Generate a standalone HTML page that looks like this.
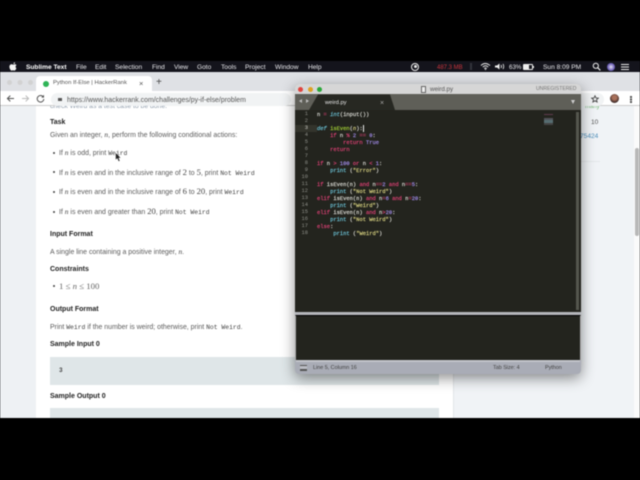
<!DOCTYPE html>
<html><head><meta charset="utf-8"><style>
html,body{margin:0;padding:0;width:640px;height:480px;overflow:hidden;background:#000}
*{box-sizing:border-box}
.a{position:absolute;white-space:pre}
#root{position:absolute;left:0;top:0;width:640px;height:480px;overflow:hidden;font-family:"Liberation Sans",sans-serif;filter:blur(.4px)}
.m{font-size:6.6px;color:#e8e8ec;top:62.5px;line-height:10px}
.t{font-size:6.95px;color:#5c5c5c;line-height:9px;left:59px}
.h{font-size:7px;font-weight:bold;color:#222;left:50px;line-height:9px}
code{font-family:"Liberation Mono",monospace;font-size:6.4px;color:#444}
i.e{font-family:"Liberation Serif",serif;font-size:7.4px;color:#444}
i.n{font-family:"Liberation Serif",serif;font-size:8.6px;color:#444;font-style:normal}
.b{position:absolute;left:52.5px;width:2.4px;height:2.4px;border-radius:50%;background:#444}
.ln{position:absolute;left:296px;width:12px;text-align:right;font:5.4px/7px "Liberation Mono",monospace;color:#8f908a;white-space:pre}
.c{position:absolute;left:317px;font:5.45px/7px "Liberation Mono",monospace;-webkit-text-stroke:.18px currentColor;color:#dcdcd6;white-space:pre}
.r{color:#dc4074}.p{color:#a08ae8}.g{color:#a0cc34}.y{color:#d8d280}.u{color:#6cc4d8}
</style></head><body><div id="root">
<!-- menu bar -->
<div class="a" style="left:0;top:61px;width:640px;height:11px;background:#14141c"></div>
<svg class="a" style="left:9px;top:62px" width="8" height="9" viewBox="0 0 8 9"><path d="M5.4 1.9C5.9 1.3 6 .7 6 .2 5.3.3 4.6.8 4.4 1.6c.4.1.7.5 1 .3zM6.6 4.7c0-.9.6-1.4.9-1.6-.5-.7-1.200-.9-1.600-.9-.7 0-1.200.4-1.600.4s-1-.4-1.600-.4C1.400 2.200.400 3.200.400 4.800c0 1.700 1.200 3.800 2.200 3.800.5 0 .8-.4 1.400-.4s.8.4 1.400.4c.8 0 1.600-1.300 2-2.500-.6-.2-.8-1-.8-1.400z" fill="#f4f4f4"/></svg>
<div class="a m" style="left:26px;font-weight:bold;color:#fff">Sublime Text</div>
<div class="a m" style="left:76px">File</div>
<div class="a m" style="left:95px">Edit</div>
<div class="a m" style="left:115px">Selection</div>
<div class="a m" style="left:152px">Find</div>
<div class="a m" style="left:174px">View</div>
<div class="a m" style="left:197px">Goto</div>
<div class="a m" style="left:221px">Tools</div>
<div class="a m" style="left:245px">Project</div>
<div class="a m" style="left:275px">Window</div>
<div class="a m" style="left:308px">Help</div>
<div class="a" style="left:411px;top:62.500px;width:8px;height:8px;border-radius:50%;border:1px solid #eee"></div>
<div class="a" style="left:413.500px;top:65px;width:3px;height:3px;border-radius:50%;background:#eee"></div>
<div class="a m" style="left:437px;color:#c8343c;font-size:6px">487.3 MB</div>
<div class="a" style="left:470px;top:63px;width:1.500px;height:7px;background:#33343c"></div>
<svg class="a" style="left:480px;top:62px" width="30" height="9" viewBox="0 0 30 9"><path d="M1 3.500Q5-.5 10 3.500M2.800 5Q5.500 2.500 8.200 5M4.300 6.500Q5.500 5.500 6.700 6.500" stroke="#eee" fill="none" stroke-width="1"/><path d="M5.500 8.300L4.500 7h2z" fill="#eee"/><path d="M15 3.500h2l2.500-2v6l-2.500-2h-2z" fill="#eee"/><path d="M21 3q1 1.500 0 3M23 2q1.500 2.500 0 5" stroke="#eee" fill="none" stroke-width=".8"/></svg>
<div class="a m" style="left:509px;font-size:6.200px">63%</div>
<div class="a" style="left:523px;top:63.500px;width:10px;height:6px;border:1px solid #eee;border-radius:1px"><div style="width:5px;height:4px;background:#eee"></div></div>
<div class="a" style="left:533px;top:65.500px;width:1px;height:2px;background:#eee"></div>
<div class="a m" style="left:543px">Sun 8:09 PM</div>
<svg class="a" style="left:592px;top:62px" width="9" height="9" viewBox="0 0 9 9"><circle cx="3.800" cy="3.800" r="2.600" fill="none" stroke="#eee"/><path d="M5.800 5.800L8.300 8.300" stroke="#eee" stroke-width="1.200"/></svg>
<div class="a" style="left:607px;top:62.500px;width:8px;height:8px;border-radius:50%;background:radial-gradient(#e4e4f4,#6d5db4 60%,#3a5fb0)"></div>
<div class="a" style="left:621px;top:63.500px;width:8px;height:6px;background:repeating-linear-gradient(#eee 0 1px,#14141c 1px 2.500px)"></div>
<!-- page -->
<div class="a" style="left:0;top:106px;width:640px;height:312px;background:#f0f3f6"></div>
<div class="a" style="left:0;top:106px;width:36px;height:312px;background:#eef1f4"></div>
<div class="a" style="left:36px;top:106px;width:418px;height:312px;background:#fff;border-right:1px solid #e2e5e8"></div>
<div class="a" style="left:634px;top:106px;width:6px;height:312px;background:#fafafa"></div>
<div class="a" style="left:635px;top:148px;width:4px;height:88px;background:#b8b8b8;border-radius:2px"></div>
<div class="a" style="left:50px;top:102px;font-size:6.800px;line-height:9px;color:#8a98a8">check Weird as a test case to be done.</div>
<div class="a" style="left:585px;top:103.500px;font-size:6px;line-height:7px;color:#7ab87a">many</div>
<div class="a" style="left:591px;top:117.500px;font-size:6.600px;line-height:9px;color:#555">10</div>
<div class="a" style="left:580px;top:131.500px;font-size:6.600px;line-height:9px;color:#4b8cb8">75424</div>
<div class="a" style="left:580px;top:160.500px;width:20px;height:1px;background:#e4e7ea"></div>
<!-- tab strip -->
<div class="a" style="left:0;top:72px;width:640px;height:19px;background:#dfe1e5"></div>
<div class="a" style="left:7px;top:80px;width:5px;height:5px;border-radius:50%;background:#d2d2d2;box-shadow:10.500px 0 #d2d2d2,21px 0 #d2d2d2"></div>
<div class="a" style="left:36px;top:76px;width:116px;height:15px;background:#fff;border-radius:4px 4px 0 0"></div>
<div class="a" style="left:43px;top:80.500px;width:6px;height:6px;border-radius:50%;background:#2fb457"></div>
<div class="a" style="left:53px;top:79px;font-size:5.900px;line-height:9px;color:#555">Python If-Else | HackerRank</div>
<div class="a" style="left:139px;top:79px;font-size:7.500px;line-height:9px;color:#555">×</div>
<div class="a" style="left:156px;top:77px;font-size:10px;line-height:12px;color:#444">+</div>
<!-- address bar -->
<div class="a" style="left:0;top:91px;width:640px;height:15px;background:#fff;border-bottom:1px solid #ccc"></div>
<div class="a" style="left:51px;top:92.500px;width:240px;height:13px;border-radius:7px;background:#f1f3f4"></div>
<svg class="a" style="left:6px;top:94px" width="9" height="9" viewBox="0 0 9 9"><path d="M8 4.500H1.500M4.300 1.600L1.400 4.500 4.300 7.400" fill="none" stroke="#555" stroke-width="1"/></svg>
<svg class="a" style="left:21px;top:94px" width="9" height="9" viewBox="0 0 9 9"><path d="M1 4.500H7.500M4.700 1.600L7.600 4.500 4.700 7.400" fill="none" stroke="#bbb" stroke-width="1"/></svg>
<svg class="a" style="left:36px;top:94px" width="9" height="9" viewBox="0 0 9 9"><path d="M7.300 3A3.300 3.300 0 1 0 7.800 5" fill="none" stroke="#555" stroke-width="1"/><path d="M8 .8V3.600H5.300z" fill="#555"/></svg>
<div class="a" style="left:57.500px;top:97.500px;width:4px;height:3.500px;background:#555"></div>
<div class="a" style="left:67px;top:95.500px;font-size:6.950px;line-height:9px;color:#555">https://www.hackerrank.com/challenges/py-if-else/problem</div>
<div class="a" style="left:580px;top:92.500px;width:24px;height:13px;border-radius:0 7px 7px 0;background:#f1f3f4"></div>
<svg class="a" style="left:591px;top:95px" width="8" height="8" viewBox="0 0 8 8"><path d="M4 .8L5 3 7.300 3.200 5.500 4.700 6.100 7 4 5.800 1.900 7 2.500 4.700.7 3.200 3 3z" fill="none" stroke="#444" stroke-width=".9"/></svg>
<div class="a" style="left:610px;top:94px;width:9px;height:9px;border-radius:50%;background:radial-gradient(circle at 50% 40%,#a8705a 30%,#3c2a28 70%)"></div>
<div class="a" style="left:630px;top:96px;width:1.500px;height:1.500px;background:#555;box-shadow:0 2.500px #555,0 5px #555"></div>
<!-- page content -->
<div class="a h" style="top:117.500px">Task</div>
<div class="a t" style="left:50px;top:130px">Given an integer, <i class="e">n</i>, perform the following conditional actions:</div>
<div class="b" style="top:151.500px"></div>
<div class="a t" style="top:148px">If <i class="e">n</i> is odd, print <code>Weird</code></div>
<div class="b" style="top:171px"></div>
<div class="a t" style="top:167.500px">If <i class="e">n</i> is even and in the inclusive range of <i class="n">2</i> to <i class="n">5</i>, print <code>Not Weird</code></div>
<div class="b" style="top:191px"></div>
<div class="a t" style="top:187px">If <i class="e">n</i> is even and in the inclusive range of <i class="n">6</i> to <i class="n">20</i>, print <code>Weird</code></div>
<div class="b" style="top:210.500px"></div>
<div class="a t" style="top:206.500px">If <i class="e">n</i> is even and greater than <i class="n">20</i>, print <code>Not Weird</code></div>
<div class="a h" style="top:229.500px">Input Format</div>
<div class="a t" style="left:50px;top:247px">A single line containing a positive integer, <i class="e">n</i>.</div>
<div class="a h" style="top:265px">Constraints</div>
<div class="b" style="top:285px"></div>
<div class="a" style="left:59px;top:282px;font:8.800px/9px 'Liberation Serif',serif;color:#666">1 ≤ <i>n</i> ≤ 100</div>
<div class="a h" style="top:305px">Output Format</div>
<div class="a t" style="left:50px;top:322.500px">Print <code>Weird</code> if the number is weird; otherwise, print <code>Not Weird</code>.</div>
<div class="a h" style="top:340px">Sample Input 0</div>
<div class="a" style="left:50px;top:357px;width:389px;height:28px;background:#dfe6e8"></div>
<div class="a" style="left:59px;top:366px;font:bold 6px/9px 'Liberation Mono',monospace;color:#444">3</div>
<div class="a h" style="top:392px">Sample Output 0</div>
<div class="a" style="left:50px;top:408px;width:389px;height:10px;background:#dfe6e8"></div>
<!-- Sublime window -->
<div class="a" style="left:295px;top:84px;width:286px;height:290px;border-radius:4px;background:#a9acb6;box-shadow:0 4px 14px rgba(0,0,0,.45)"></div>
<div class="a" style="left:295px;top:84px;width:286px;height:10px;background:#d6d6d6;border-radius:4px 4px 0 0"></div>
<div class="a" style="left:298px;top:87px;width:5px;height:5px;border-radius:50%;background:#e0443e"></div>
<div class="a" style="left:307.500px;top:87px;width:5px;height:5px;border-radius:50%;background:#dea123"></div>
<div class="a" style="left:317px;top:87px;width:5px;height:5px;border-radius:50%;background:#2aa83a"></div>
<div class="a" style="left:421px;top:86px;width:5px;height:6.500px;background:#eee;border:1px solid #666"></div>
<div class="a" style="left:430px;top:85px;font-size:6.200px;line-height:9px;color:#555">weird.py</div>
<div class="a" style="left:536px;top:85px;font-size:5.100px;line-height:9px;color:#777">UNREGISTERED</div>
<div class="a" style="left:295px;top:94px;width:286px;height:16px;background:#5f5f58"></div>
<svg class="a" style="left:295px;top:94px" width="105" height="16" viewBox="0 0 105 16"><path d="M14 16L23 .500H95L100 16z" fill="#272822"/></svg>
<div class="a" style="left:299px;top:99px;width:0;height:0;border:2px solid transparent;border-right:3px solid #bbb;border-left:0"></div>
<div class="a" style="left:306px;top:99px;width:0;height:0;border:2px solid transparent;border-left:3px solid #bbb;border-right:0"></div>
<div class="a" style="left:325px;top:99px;font-size:5.800px;line-height:9px;color:#e8e8e8">weird.py</div>
<div class="a" style="left:380px;top:99px;font-size:7px;line-height:9px;color:#aaa">×</div>
<div class="a" style="left:571px;top:100px;width:0;height:0;border:2.500px solid transparent;border-top:4px solid #ccc;border-bottom:0"></div>
<div class="a" style="left:295px;top:110px;width:286px;height:202px;background:#23241e"></div>
<div class="a" style="left:295px;top:124.500px;width:22px;height:7px;background:#33342c"></div>
<div class="a" style="left:576px;top:112px;width:3px;height:198px;background:#55564e"></div>
<div class="a" style="left:295px;top:312px;width:286px;height:3px;background:#b5b6bb"></div>
<div class="a" style="left:295px;top:315px;width:286px;height:45px;background:#23241e;border-top:1px solid #000;border-left:1px solid #aaa;border-right:1px solid #aaa"></div>
<div class="a" style="left:296px;top:360px;width:284px;height:1.500px;background:#c2c4ca"></div>
<div class="a" style="left:300px;top:365px;width:7px;height:5.500px;border:1px solid #555;border-width:1px 0 2px;background:#bbbdc4"></div>
<div class="a" style="left:313px;top:363.500px;font-size:5.400px;line-height:9px;color:#444">Line 5, Column 16</div>
<div class="a" style="left:493px;top:363.500px;font-size:5.400px;line-height:9px;color:#444">Tab Size: 4</div>
<div class="a" style="left:545px;top:363.500px;font-size:5.400px;line-height:9px;color:#444">Python</div>
<!-- minimap -->
<div class="a" style="left:544px;top:111px;width:9px;height:15px;background:linear-gradient(#23241e 0 3px,#6a3f55 3px 4px,#23241e 4px 7px,#5a5a64 7px 9px,#5f7a80 9px 12px,#4a4a4a 12px 14px,#23241e 14px);opacity:.85"></div>
<!-- line numbers -->
<div class="ln" style="top:110.500px">1
2
<span style="color:#cfcfc8">3</span>
4
5
6
7
8
9
10
11
12
13
14
15
16
17
18</div>
<!-- code -->
<div class="c" style="top:110.500px">n <span class="r">=</span> <i class="u">int</i>(input())

<i class="u">def</i> <span class="g">isEven</span>(<i class="y">n</i>):<span style="border-left:.6px solid #eee"></span>
    <span class="r">if</span> n <span class="r">%</span> <span class="p">2</span> <span class="r">==</span> <span class="p">0</span>:
        <span class="r">return</span> <span class="p">True</span>
    <span class="r">return</span>

<span class="r">if</span> n <span class="r">&gt;</span> <span class="p">100</span> <span class="r">or</span> n <span class="r">&lt;</span> <span class="p">1</span>:
    <span class="u">print</span> (<span class="y">"Error"</span>)

<span class="r">if</span> isEven(n) <span class="r">and</span> n<span class="r">==</span><span class="p">2</span> <span class="r">and</span> n<span class="r">==</span><span class="p">5</span>:
    <span class="u">print</span> (<span class="y">"Not Weird"</span>)
<span class="r">elif</span> isEven(n) <span class="r">and</span> n<span class="r">=</span><span class="p">6</span> <span class="r">and</span> n<span class="r">=</span><span class="p">20</span>:
    <span class="u">print</span> (<span class="y">"Weird"</span>)
<span class="r">elif</span> isEven(n) <span class="r">and</span> n<span class="r">&gt;</span><span class="p">20</span>:
    <span class="u">print</span> (<span class="y">"Not Weird"</span>)
<span class="r">else</span>:
     <span class="u">print</span> (<span class="y">"Weird"</span>)</div>
<!-- cursor -->
<svg class="a" style="left:115px;top:152px" width="7" height="11" viewBox="0 0 7 11"><path d="M.500.500V8L2.300 6.500 3.500 9.500 5 9 3.800 6H6z" fill="#222" stroke="#fff" stroke-width=".5"/></svg>
</div></body></html>
